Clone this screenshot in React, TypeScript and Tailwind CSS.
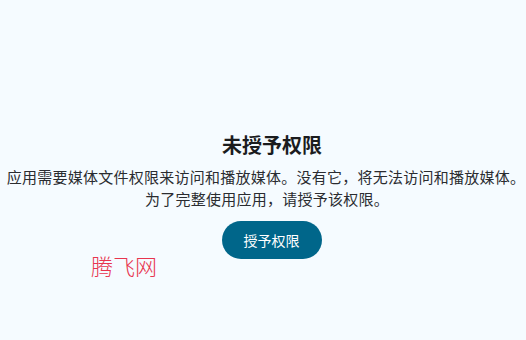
export default function App() {
  return (
    <div
      className="relative w-[526px] h-[340px] overflow-hidden bg-[#f5fbff] flex flex-col items-center text-center"
      style={{ fontFamily: '"Noto Sans CJK SC", "Noto Sans", sans-serif' }}
    >
      <div className="mt-[131px] ml-[18px] text-[20px] leading-[28px] font-bold text-[#1a1c1e]">未授予权限</div>
      <div className="mt-[7px] ml-[6px] text-[15px] leading-[22px] text-[#2a2c30] whitespace-nowrap tracking-[0.25px]">
        应用需要媒体文件权限来访问和播放媒体。没有它，将无法访问和播放媒体。
      </div>
      <div className="ml-[8px] text-[15px] leading-[22px] text-[#2a2c30] whitespace-nowrap tracking-[0.25px]">
        为了完整使用应用，请授予该权限。
      </div>
      <button className="mt-[11px] ml-[17px] h-[38px] px-[22px] rounded-full bg-[#00668a] text-white text-[14px] font-normal">
        授予权限
      </button>
      <div className="absolute left-[91px] top-[250px] text-[22px] leading-[30px] font-light text-[#e8344e]">腾飞网</div>
    </div>
  );
}
